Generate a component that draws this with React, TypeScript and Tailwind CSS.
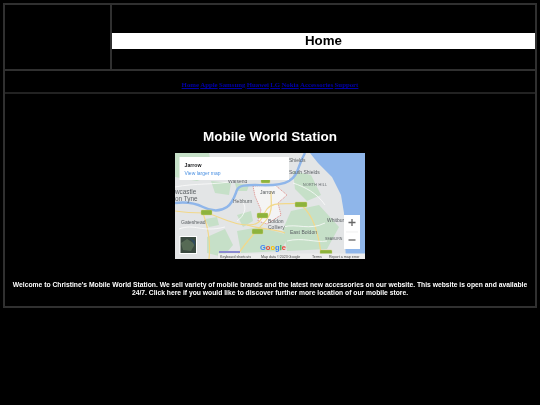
const navLinks = ['Home', 'Apple', 'Samsung', 'Huawei', 'LG', 'Nokia', 'Accessories', 'Support']

function MapEmbed() {
  return (
    <svg width="190" height="106" viewBox="0 0 190 106" className="block" style={{ fontFamily: '"Liberation Sans", sans-serif' }}>
      <rect width="190" height="106" fill="#e3e5e6" />
      {/* green areas */}
      <g fill="#c6e0c8">
        <path d="M0 0h34l4 22-16 6-22-4z" />
        <path d="M36 28l20 2-2 12-14-2z" />
        <path d="M118 18l18 4 10 20-14 6-12-12z" />
        <path d="M116 58l28-6 20 22-12 22-40 2-4-22z" />
        <path d="M62 78l22-4 30 8-8 16-40 2z" />
        <path d="M32 84l18-8 8 16-10 12-16-4z" />
        <path d="M62 62l14-4 2 10-10 6z" />
        <path d="M30 66l12-2 2 8-10 2z" />
        <path d="M60 30l14 2-2 6-10 0z" />
      </g>
      {/* sea */}
      <path d="M135 0L190 0 190 106 171 106 170 90 169 60 166 42 157 24 143 10z" fill="#8fb6ea" />
      {/* jarrow */}
      <path d="M78 33L100 32 112 42 103 50 106 62 92 71 83 68 86 57 80 43z" fill="#f4f4f4" stroke="#d9605a" strokeWidth="0.600" strokeDasharray="1.200 0.800" />
      {/* river */}
      <path d="M0 50C8 49 18 49 28 54S46 58 52 54 60 42 62 37 72 32 80 32 104 34 114 28 122 14 130 0" fill="none" stroke="#8fb6ea" strokeWidth="2.400" />
      {/* roads */}
      <g fill="none" stroke="#f2d88a" strokeWidth="1.200">
        <path d="M0 58C12 60 22 60 30 60S56 72 72 72 86 64 92 56 110 52 124 50" />
        <path d="M28 60C32 72 36 86 34 106" />
        <path d="M96 38C96 50 98 58 92 66S72 86 60 106" />
        <path d="M124 50C134 58 142 70 146 100" />
        <path d="M72 72C84 76 100 76 110 80" />
      </g>
      <g fill="none" stroke="#fbfbfb" strokeWidth="0.800">
        <path d="M0 34C20 30 40 32 60 28M58 48C72 44 74 60 62 68M108 74C122 70 134 78 150 70M4 76C20 70 26 80 50 74M118 30C130 34 142 40 150 52M112 88C128 84 140 90 152 88" />
      </g>
      <g fill="#8db33c" stroke="#d8d27a" strokeWidth="0.400">
        <rect x="26" y="57" width="11" height="5" rx="1" />
        <rect x="82" y="60" width="11" height="5" rx="1" />
        <rect x="77" y="76" width="11" height="5" rx="1" />
        <rect x="120" y="49" width="12" height="5" rx="1" />
        <rect x="145" y="97" width="12" height="5" rx="1" />
        <rect x="86" y="25" width="9" height="5" rx="1" />
      </g>
      <g fill="#5a5f63" fontSize="5">
        <text x="0" y="41" fontSize="6.400">wcastle</text>
        <text x="0" y="48" fontSize="6.400">on Tyne</text>
        <text x="6" y="71">Gateshead</text>
        <text x="58" y="50">Hebburn</text>
        <text x="53" y="29.500">Walsend</text>
        <text x="114" y="9">Shields</text>
        <text x="114" y="21">South Shields</text>
        <text x="128" y="32.500" fontSize="3.600" letterSpacing="0.300">NORTH HILL</text>
        <text x="152" y="68.500">Whitburn</text>
        <text x="85" y="41">Jarrow</text>
        <text x="93" y="70">Boldon</text>
        <text x="93" y="76">Colliery</text>
        <text x="115" y="81">East Boldon</text>
        <text x="150" y="87" fontSize="3.600">SEABURN</text>
      </g>
      {/* map info window */}
      <rect x="4.500" y="4" width="109.500" height="23" fill="#fff" />
      <text x="9.500" y="14" fontSize="5.200" fontWeight="600" fill="#202124">Jarrow</text>
      <text x="9.500" y="21.500" fontSize="5" fill="#4a90e2">View larger map</text>
      {/* satellite toggle */}
      <rect x="4.500" y="83" width="17.500" height="18" fill="#fff" />
      <rect x="5.500" y="84" width="15.500" height="16" fill="#3b4a40" />
      <path d="M6 90l6-4 8 5-4 7-8-1z" fill="#566a55" />
      <path d="M15 85l5 3v5z" fill="#2f4a5e" />
      {/* zoom control */}
      <rect x="169" y="62" width="16" height="34" fill="#fff" />
      <path d="M173.500 69.500h7M177 66v7" stroke="#666" strokeWidth="1.300" />
      <path d="M171 79h12" stroke="#e6e6e6" strokeWidth="0.600" />
      <path d="M173.500 87h7" stroke="#666" strokeWidth="1.300" />
      {/* google logo */}
      <text x="85" y="97" fontSize="7.500" fontWeight="700">
        <tspan fill="#4285f4">G</tspan>
        <tspan fill="#ea4335">o</tspan>
        <tspan fill="#fbbc05">o</tspan>
        <tspan fill="#4285f4">g</tspan>
        <tspan fill="#34a853">l</tspan>
        <tspan fill="#ea4335">e</tspan>
      </text>
      {/* attribution */}
      <rect x="43" y="100.500" width="147" height="5.500" fill="#ededed" />
      <rect x="44" y="98" width="21" height="2" fill="#8a8ad0" />
      <g fontSize="3.600" fill="#444">
        <text x="45" y="104.500">Keyboard shortcuts</text>
        <text x="86" y="104.500">Map data ©2023 Google</text>
        <text x="137" y="104.500">Terms</text>
        <text x="154" y="104.500">Report a map error</text>
      </g>
    </svg>
  )
}

export default function App() {
  return (
    <div className="min-h-[405px] bg-black px-[3px] pt-[3px] font-['Liberation_Sans',sans-serif] text-white blur-[0.4px]">
      <div className="border-2 border-[#303030]">
        <div className="flex h-[66px] border-b-2 border-[#303030]">
          <div className="w-[107px] border-r-2 border-[#303030]" />
          <div className="flex-1 pt-[28px]">
            <h2 className="h-[16px] w-full bg-white text-center text-[13.300px] leading-[16px] font-bold text-black">Home</h2>
          </div>
        </div>
        <nav className="flex h-[23px] items-end justify-center gap-[1.300px] border-b-2 border-[#222] pb-[2px] font-['Liberation_Serif',serif] text-[6.800px] leading-[10px] font-bold text-[#0000a8]">
          {navLinks.map((link) => (
            <a key={link} href="#" className="underline">
              {link}
            </a>
          ))}
        </nav>
        <main className="flex h-[212px] flex-col items-center pt-[34px]">
          <h1 className="text-[13.500px] leading-[17px] font-bold">Mobile World Station</h1>
          <div className="mt-[8px]">
            <MapEmbed />
          </div>
          <p className="mt-[22px] px-[7px] text-center text-[6.750px] leading-[8px] font-bold">
            Welcome to Christine's Mobile World Station. We sell variety of mobile brands and the latest new accessories on our website. This website is open and available 24/7. Click here if you would like to discover further more location of our mobile store.
          </p>
        </main>
      </div>
    </div>
  )
}
